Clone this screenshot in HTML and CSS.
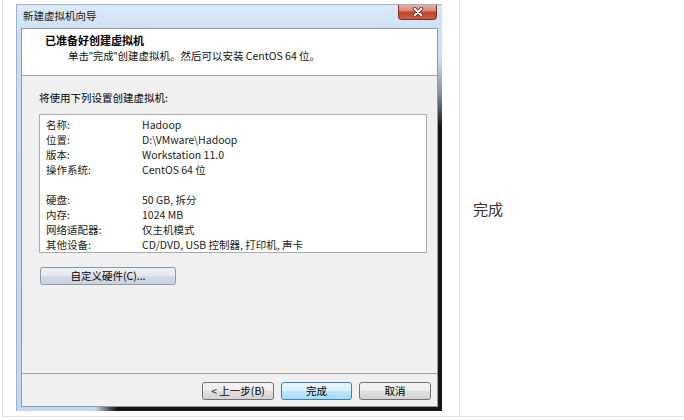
FILE: index.html
```html
<!DOCTYPE html>
<html lang="zh-CN">
<head>
<meta charset="utf-8">
<title>新建虚拟机向导</title>
<link rel="stylesheet" href="styles.css">
</head>
<body>
<div class="page">
  <div class="cell-left">
    <div class="window">
      <div class="titlebar">
        <span class="title">新建虚拟机向导</span>
        <span class="close">
          <svg width="12" height="10" viewBox="0 0 12 10">
            <path d="M2.5 1.5 L9.5 8.5 M9.5 1.5 L2.5 8.5" stroke="#4a2a24" stroke-width="3.4" stroke-linecap="round" fill="none"/>
            <path d="M2.5 1.5 L9.5 8.5 M9.5 1.5 L2.5 8.5" stroke="#ffffff" stroke-width="1.8" stroke-linecap="round" fill="none"/>
          </svg>
        </span>
      </div>
      <div class="client">
        <div class="header">
          <div class="h-title">已准备好创建虚拟机</div>
          <div class="h-sub">单击<span class="q">"</span>完成<span class="q">"</span>创建虚拟机。然后可以安装 CentOS 64 位。</div>
        </div>
        <div class="body">
          <div class="intro">将使用下列设置创建虚拟机:</div>
          <div class="list">
            <div class="row"><span class="k">名称:</span><span class="v">Hadoop</span></div>
            <div class="row"><span class="k">位置:</span><span class="v">D:\VMware\Hadoop</span></div>
            <div class="row"><span class="k">版本:</span><span class="v">Workstation 11.0</span></div>
            <div class="row"><span class="k">操作系统:</span><span class="v">CentOS 64 位</span></div>
            <div class="row"><span class="k"></span><span class="v"></span></div>
            <div class="row"><span class="k">硬盘:</span><span class="v">50 GB, 拆分</span></div>
            <div class="row"><span class="k">内存:</span><span class="v">1024 MB</span></div>
            <div class="row"><span class="k">网络适配器:</span><span class="v">仅主机模式</span></div>
            <div class="row"><span class="k">其他设备:</span><span class="v">CD/DVD, USB 控制器, 打印机, 声卡</span></div>
          </div>
          <button class="btn btn-custom">自定义硬件(C)...</button>
        </div>
        <div class="footer">
          <button class="btn">&lt; 上一步(B)</button>
          <button class="btn btn-default">完成</button>
          <button class="btn">取消</button>
        </div>
      </div>
    </div>
  </div>
  <div class="cell-right">完成</div>
</div>
</body>
</html>
```

FILE: styles.css
```css
html, body {
  margin: 0;
  padding: 0;
  background: #ffffff;
}

body {
  font-family: "Noto Sans CJK SC", sans-serif;
  font-size: 10.5px;
  color: #000;
}

.page {
  display: flex;
  margin-left: 2px;
  height: 416px;
  border-left: 1px solid #e3e3e3;
  border-bottom: 1px solid #e3e3e3;
}

.cell-left {
  box-sizing: border-box;
  width: 457px;
  border-right: 1px solid #e3e3e3;
  padding: 4px 0 0 13px;
}

.cell-right {
  flex: 1;
  display: flex;
  align-items: center;
  padding-left: 13px;
  font-size: 15px;
  color: #333;
}

.window {
  box-sizing: border-box;
  width: 426px;
  height: 407px;
  padding: 0 4px 4px 4px;
  border-top: 1px solid #9fb2c6;
  border-left: 1px solid #9fb2c6;
  display: flex;
  flex-direction: column;
  background:
    linear-gradient(to right, rgba(20, 20, 20, 0) 78px, #141414 100px) left bottom / 100% 4px no-repeat,
    linear-gradient(#d3e5f7 0, #c8dcf1 55px, #8b9097 88px, #161616 122px) right top / 4px 100% no-repeat,
    linear-gradient(#dcebf9, #c9def3 30px, #c1d8f0);
}

.titlebar {
  height: 23px;
  display: flex;
  align-items: flex-start;
}

.title {
  line-height: 21px;
  padding-left: 2px;
  color: #1a1a1a;
}

.close {
  box-sizing: border-box;
  margin-left: auto;
  margin-right: 1px;
  width: 39px;
  height: 15px;
  border: 1px solid #7a2d20;
  border-top: none;
  border-radius: 0 0 4px 4px;
  background: linear-gradient(#eab0a2 0%, #d9887a 40%, #c5472d 52%, #cf5a3f 100%);
  display: flex;
  align-items: center;
  justify-content: center;
}

.client {
  flex: 1;
  display: flex;
  flex-direction: column;
  border: 1px solid #8f9aa6;
  background: #f0f0f0;
}

.header {
  box-sizing: border-box;
  height: 47px;
  background: #ffffff;
  border-bottom: 1px solid #a0a0a0;
  padding: 4px 0 0 23px;
}

.h-title {
  font-size: 11px;
  font-weight: 700;
  line-height: 15px;
}

.h-sub {
  line-height: 15px;
  padding-left: 23px;
  color: #111;
}

.q {
  font-family: "Liberation Sans", sans-serif;
}

.body {
  flex: 1;
  padding: 14px 10px 0 17px;
}

.intro {
  line-height: 15px;
}

.list {
  box-sizing: border-box;
  margin-top: 9px;
  height: 139px;
  background: #ffffff;
  border: 1px solid #aaaaaa;
  padding: 2px 0 0 6px;
}

.row {
  display: flex;
  height: 15px;
  line-height: 15px;
  color: #222;
}

.k {
  width: 96px;
  flex: none;
}

.btn {
  box-sizing: border-box;
  font-family: inherit;
  font-size: 10.5px;
  height: 18px;
  width: 72px;
  padding: 0;
  line-height: 16px;
  color: #000;
  border: 1px solid #707070;
  border-radius: 3px;
  background: linear-gradient(#f4f4f4 0%, #ececec 50%, #dfdfdf 52%, #d2d2d2 100%);
}

.btn-custom {
  display: block;
  margin: 14px 0 0 1px;
  width: 136px;
  border-color: #8b97a4;
  background: linear-gradient(#eef2f6 0%, #e1e8ef 50%, #d2dce6 52%, #c6d2de 100%);
}

.btn-default {
  width: 71px;
  border-color: #3c7fb1;
  background: linear-gradient(#eaf6fd 0%, #d9f0fc 50%, #bee6fd 52%, #a9dbf6 100%);
}

.footer {
  box-sizing: border-box;
  height: 33px;
  border-top: 1px solid #a0a0a0;
  display: flex;
  justify-content: flex-end;
  gap: 7px;
  padding: 8px 6px 0 0;
}
```
